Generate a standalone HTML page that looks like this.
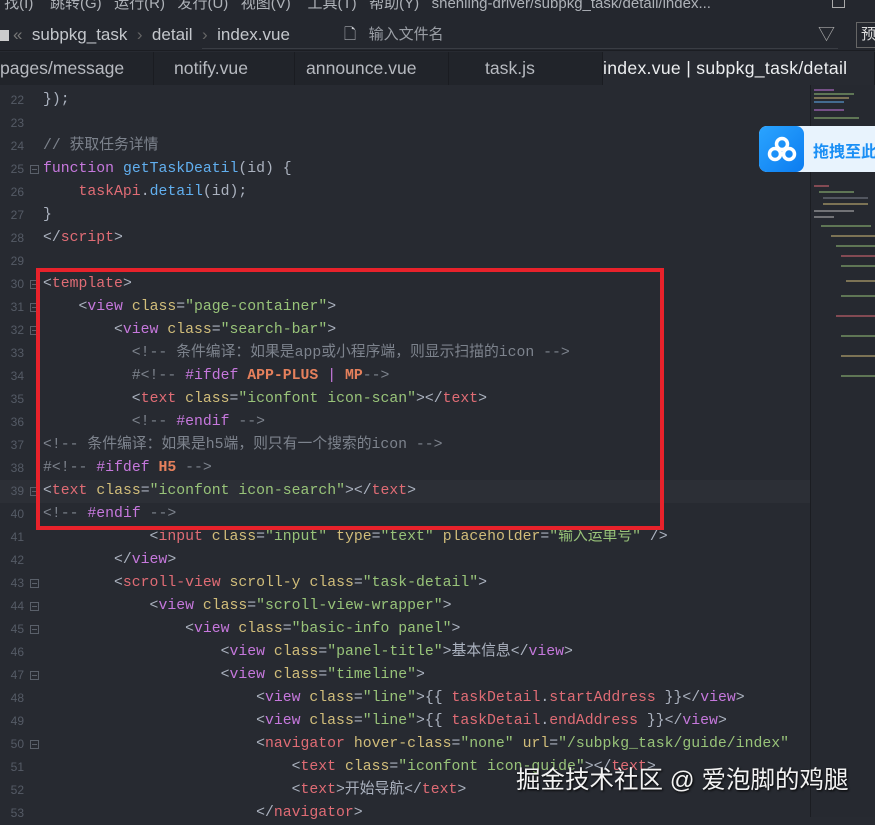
<!DOCTYPE html>
<html><head><meta charset="utf-8"><style>
*{margin:0;padding:0;box-sizing:border-box}
body{width:875px;height:817px;overflow:hidden;background:#272a31;font-family:"Liberation Sans","Noto Sans CJK SC",sans-serif;color:#abb2bf;position:relative}
.menu{position:absolute;top:0;left:0;width:875px;height:18px;background:#24272e;color:#aeb2b8;font-size:15px;line-height:8px;white-space:nowrap;overflow:hidden}
.path{position:absolute;top:18px;left:0;width:875px;height:33px;background:#24272e;border-bottom:1px solid #1b1d22;font-size:17px;color:#c4c7cc;line-height:34px;white-space:nowrap}
.tabs{position:absolute;top:52px;left:0;width:875px;height:33px;background:#21242a;font-size:17.6px;color:#b7bac0;line-height:33px;white-space:nowrap}
.tab{position:absolute;top:0;height:33px;border-right:1px solid #1a1c21;padding-left:0}
.code{position:absolute;left:0;top:89px;width:810px;font-family:"Liberation Mono","Noto Sans CJK SC",monospace;font-size:14.8px}
.l{position:absolute;left:0;height:23px;line-height:23px;white-space:pre;width:810px}
.n{position:absolute;left:4px;width:20px;text-align:right;font-size:12px;color:#555b66;font-family:"Liberation Sans",sans-serif}
.f{position:absolute;left:30px;top:7px;width:9px;height:9px;border:1px solid #5a606a}
.f:after{content:"";position:absolute;left:1px;top:3px;width:5px;height:1px;background:#5a606a}
.t{position:absolute;left:43px}
.r{color:#e06c75}.p{color:#c678dd}.a{color:#d1bd7a}.g{color:#98c379}.c{color:#7d838d}.b{color:#61afef}.o{color:#e5805c;font-weight:bold}.w{color:#abb2bf}
.mini{position:absolute;left:810px;top:85px;width:65px;height:732px;background:#262930;border-left:1px solid #1b1d22}
.mini i{position:absolute;height:2px;opacity:.5}
</style></head><body>
<div class="menu">&nbsp;找(I)&nbsp;&nbsp;&nbsp; 跳转(G)&nbsp;&nbsp; 运行(R)&nbsp;&nbsp; 发行(U)&nbsp;&nbsp; 视图(V)&nbsp;&nbsp;&nbsp; 工具(T)&nbsp;&nbsp; 帮助(Y)&nbsp;&nbsp; shenling-driver/subpkg_task/detail/index...</div>
<div style="position:absolute;left:832px;top:0;width:13px;height:8px;border:1px solid #aaa;border-top:none"></div>
<div class="path"><span style="display:inline-block;width:9px;height:11px;background:#ccc;margin-right:4px;vertical-align:-1px"></span><span style="color:#777">«</span>&nbsp; subpkg_task&nbsp; <span style="color:#666">›</span>&nbsp; detail&nbsp; <span style="color:#666">›</span>&nbsp; index.vue
<div style="position:absolute;left:202px;top:4px;width:636px;height:27px;border-bottom:1px solid #3a3d44"></div>
<span style="position:absolute;left:344px;top:0;font-size:15px;color:#c8cbd0">🗋&nbsp;&nbsp; <span style="color:#9a9ea5">输入文件名</span></span>
<span style="position:absolute;left:818px;top:0;color:#aaa">▽</span>
<span style="position:absolute;left:856px;top:4px;width:22px;height:26px;border:1px solid #666;line-height:24px;padding-left:4px;color:#ddd;font-size:15px">预</span></div>
<div class="tabs">
<div class="tab" style="left:0;width:154px;padding-left:0">pages/message</div>
<div class="tab" style="left:154px;width:141px;padding-left:20px">notify.vue</div>
<div class="tab" style="left:295px;width:154px;padding-left:11px">announce.vue</div>
<div class="tab" style="left:449px;width:154px;padding-left:36px">task.js</div>
<div class="tab" style="left:603px;width:272px;background:#272a31;color:#eceef0;padding-left:0;letter-spacing:0.3px">index.vue | subpkg_task/detail</div>
</div>
<div class="code">
<div class="l" style="top:0"><span class="n">22</span><span class="t w">});</span></div>
<div class="l" style="top:23px"><span class="n">23</span></div>
<div class="l" style="top:46px"><span class="n">24</span><span class="t c">// 获取任务详情</span></div>
<div class="l" style="top:69px"><span class="n">25</span><span class="f"></span><span class="t"><span class="p">function</span> <span class="b">getTaskDeatil</span>(id) {</span></div>
<div class="l" style="top:92px"><span class="n">26</span><span class="t">    <span class="r">taskApi</span>.<span class="b">detail</span>(id);</span></div>
<div class="l" style="top:115px"><span class="n">27</span><span class="t">}</span></div>
<div class="l" style="top:138px"><span class="n">28</span><span class="t">&lt;/<span class="r">script</span>&gt;</span></div>
<div class="l" style="top:161px"><span class="n">29</span></div>
<div class="l" style="top:184px"><span class="n">30</span><span class="f"></span><span class="t">&lt;<span class="r">template</span>&gt;</span></div>
<div class="l" style="top:207px"><span class="n">31</span><span class="f"></span><span class="t">    &lt;<span class="p">view</span> <span class="a">class</span>=<span class="g">"page-container"</span>&gt;</span></div>
<div class="l" style="top:230px"><span class="n">32</span><span class="f"></span><span class="t">        &lt;<span class="p">view</span> <span class="a">class</span>=<span class="g">"search-bar"</span>&gt;</span></div>
<div class="l" style="top:253px"><span class="n">33</span><span class="t c">          &lt;!-- 条件编译：如果是app或小程序端，则显示扫描的icon --&gt;</span></div>
<div class="l" style="top:276px"><span class="n">34</span><span class="t">          <span class="c">#&lt;!--</span> <span class="p">#ifdef</span> <span class="o">APP-PLUS</span> <span class="p">|</span> <span class="o">MP</span><span class="c">--&gt;</span></span></div>
<div class="l" style="top:299px"><span class="n">35</span><span class="t">          &lt;<span class="r">text</span> <span class="a">class</span>=<span class="g">"iconfont icon-scan"</span>&gt;&lt;/<span class="r">text</span>&gt;</span></div>
<div class="l" style="top:322px"><span class="n">36</span><span class="t">          <span class="c">&lt;!--</span> <span class="p">#endif</span> <span class="c">--&gt;</span></span></div>
<div class="l" style="top:345px"><span class="n">37</span><span class="t c">&lt;!-- 条件编译：如果是h5端，则只有一个搜索的icon --&gt;</span></div>
<div class="l" style="top:368px"><span class="n">38</span><span class="t"><span class="c">#&lt;!--</span> <span class="p">#ifdef</span> <span class="o">H5</span> <span class="c">--&gt;</span></span></div>
<div class="l" style="top:391px;background:#2c2f36"><span class="n">39</span><span class="f"></span><span class="t">&lt;<span class="r">text</span> <span class="a">class</span>=<span class="g">"iconfont icon-search"</span>&gt;&lt;/<span class="r">text</span>&gt;</span></div>
<div class="l" style="top:414px"><span class="n">40</span><span class="t"><span class="c">&lt;!--</span> <span class="p">#endif</span> <span class="c">--&gt;</span></span></div>
<div class="l" style="top:437px"><span class="n">41</span><span class="t">            &lt;<span class="r">input</span> <span class="a">class</span>=<span class="g">"input"</span> <span class="a">type</span>=<span class="g">"text"</span> <span class="a">placeholder</span>=<span class="g">"输入运单号"</span> /&gt;</span></div>
<div class="l" style="top:460px"><span class="n">42</span><span class="t">        &lt;/<span class="p">view</span>&gt;</span></div>
<div class="l" style="top:483px"><span class="n">43</span><span class="f"></span><span class="t">        &lt;<span class="r">scroll-view</span> <span class="a">scroll-y</span> <span class="a">class</span>=<span class="g">"task-detail"</span>&gt;</span></div>
<div class="l" style="top:506px"><span class="n">44</span><span class="f"></span><span class="t">            &lt;<span class="p">view</span> <span class="a">class</span>=<span class="g">"scroll-view-wrapper"</span>&gt;</span></div>
<div class="l" style="top:529px"><span class="n">45</span><span class="f"></span><span class="t">                &lt;<span class="p">view</span> <span class="a">class</span>=<span class="g">"basic-info panel"</span>&gt;</span></div>
<div class="l" style="top:552px"><span class="n">46</span><span class="t">                    &lt;<span class="p">view</span> <span class="a">class</span>=<span class="g">"panel-title"</span>&gt;基本信息&lt;/<span class="p">view</span>&gt;</span></div>
<div class="l" style="top:575px"><span class="n">47</span><span class="f"></span><span class="t">                    &lt;<span class="p">view</span> <span class="a">class</span>=<span class="g">"timeline"</span>&gt;</span></div>
<div class="l" style="top:598px"><span class="n">48</span><span class="t">                        &lt;<span class="p">view</span> <span class="a">class</span>=<span class="g">"line"</span>&gt;{{ <span class="r">taskDetail</span>.<span class="r">startAddress</span> }}&lt;/<span class="p">view</span>&gt;</span></div>
<div class="l" style="top:621px"><span class="n">49</span><span class="t">                        &lt;<span class="p">view</span> <span class="a">class</span>=<span class="g">"line"</span>&gt;{{ <span class="r">taskDetail</span>.<span class="r">endAddress</span> }}&lt;/<span class="p">view</span>&gt;</span></div>
<div class="l" style="top:644px"><span class="n">50</span><span class="f"></span><span class="t">                        &lt;<span class="r">navigator</span> <span class="a">hover-class</span>=<span class="g">"none"</span> <span class="a">url</span>=<span class="g">"/subpkg_task/guide/index"</span></span></div>
<div class="l" style="top:667px"><span class="n">51</span><span class="t">                            &lt;<span class="r">text</span> <span class="a">class</span>=<span class="g">"iconfont icon-guide"</span>&gt;&lt;/<span class="r">text</span>&gt;</span></div>
<div class="l" style="top:690px"><span class="n">52</span><span class="t">                            &lt;<span class="r">text</span>&gt;开始导航&lt;/<span class="r">text</span>&gt;</span></div>
<div class="l" style="top:713px"><span class="n">53</span><span class="t">                        &lt;/<span class="r">navigator</span>&gt;</span></div>
</div>
<div style="position:absolute;left:36px;top:268px;width:628px;height:262px;border:4px solid #e8222b"></div>
<div class="mini">
<i style="left:3px;top:4px;width:20px;background:#c678dd"></i><i style="left:3px;top:8px;width:40px;background:#98c379"></i><i style="left:3px;top:12px;width:35px;background:#d1bd7a"></i><i style="left:3px;top:16px;width:30px;background:#61afef"></i><i style="left:3px;top:24px;width:30px;background:#c678dd"></i><i style="left:3px;top:32px;width:45px;background:#98c379"></i>
<i style="left:3px;top:100px;width:15px;background:#e06c75"></i><i style="left:8px;top:106px;width:35px;background:#98c379"></i><i style="left:12px;top:112px;width:45px;background:#7d838d"></i><i style="left:12px;top:118px;width:45px;background:#d1bd7a"></i><i style="left:3px;top:125px;width:40px;background:#bbb"></i><i style="left:3px;top:131px;width:20px;background:#bbb"></i>
<i style="left:10px;top:140px;width:50px;background:#98c379"></i><i style="left:20px;top:150px;width:45px;background:#d1bd7a"></i><i style="left:25px;top:160px;width:40px;background:#98c379"></i><i style="left:30px;top:170px;width:35px;background:#e06c75"></i><i style="left:30px;top:180px;width:35px;background:#98c379"></i><i style="left:35px;top:195px;width:30px;background:#d1bd7a"></i><i style="left:30px;top:210px;width:35px;background:#98c379"></i><i style="left:25px;top:230px;width:40px;background:#e06c75"></i><i style="left:30px;top:250px;width:35px;background:#98c379"></i><i style="left:30px;top:270px;width:35px;background:#d1bd7a"></i><i style="left:30px;top:290px;width:35px;background:#98c379"></i>
</div>
<div style="position:absolute;left:759px;top:126px;width:116px;height:46px;background:#e8f3fd;border-radius:8px 0 0 8px">
<div style="position:absolute;left:0;top:0;width:45px;height:46px;background:linear-gradient(135deg,#2aa4ff,#0c7cf0);border-radius:8px"></div>
<svg style="position:absolute;left:8px;top:9px" width="30" height="28" viewBox="0 0 30 28"><circle cx="15" cy="9" r="5.5" fill="none" stroke="#fff" stroke-width="3.5"/><circle cx="8" cy="19" r="5.5" fill="none" stroke="#fff" stroke-width="3.5"/><circle cx="22" cy="19" r="5.5" fill="none" stroke="#fff" stroke-width="3.5"/></svg>
<div style="position:absolute;left:54px;top:12px;font-size:16px;font-weight:bold;color:#1a8ff5;white-space:nowrap">拖拽至此</div>
</div>
<div style="position:absolute;left:516px;top:761px;font-size:24.5px;color:#f2f2f2;white-space:nowrap;text-shadow:1px 1px 2px #000">掘金技术社区 @ 爱泡脚的鸡腿</div>
</body></html>
